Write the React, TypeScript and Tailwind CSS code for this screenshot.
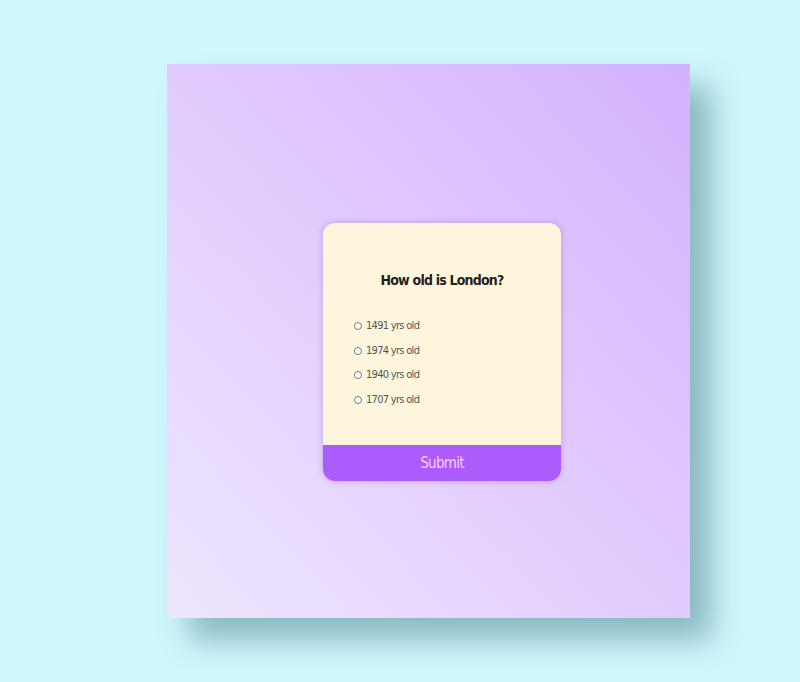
const options = ["1491 yrs old", "1974 yrs old", "1940 yrs old", "1707 yrs old"];

export default function App() {
  return (
    <div className="min-h-screen w-full bg-[#cff7fe] flex items-center pl-[167px]" style={{ fontFamily: '"DejaVu Sans Condensed", "Open Sans", sans-serif' }}>
      {/* Panel */}
      <div className="w-[523px] h-[554px] bg-gradient-to-tr from-[#eee6fe] to-[#d5b1fe] shadow-[22px_22px_28px_rgba(60,110,120,0.45)] pl-[156px] pt-[159px]">
        {/* Quiz card */}
        <div className="w-[238px] rounded-[12px] bg-[#fef6dc] shadow-[0_0_6px_rgba(90,60,140,0.3)] overflow-hidden flex flex-col">
          <h2 className="text-center text-[14px] font-bold text-[#1f1f1f] mt-[47px] tracking-[-0.8px]">How old is London?</h2>
          <div className="flex flex-col gap-[8px] pl-[31px] mt-[27px] mb-[37px]">
            {options.map((o) => (
              <label key={o} className="flex items-center gap-[4px] text-[11px] text-[#555] h-[16.5px] tracking-[-0.7px]">
                <span className="w-[8px] h-[8px] rounded-full border border-[#777] bg-white" />
                {o}
              </label>
            ))}
          </div>
          <button className="h-[36px] w-full bg-[#ac5cfc] text-[#f6d0f6] text-[15px] tracking-[-0.7px]">Submit</button>
        </div>
      </div>
    </div>
  );
}
